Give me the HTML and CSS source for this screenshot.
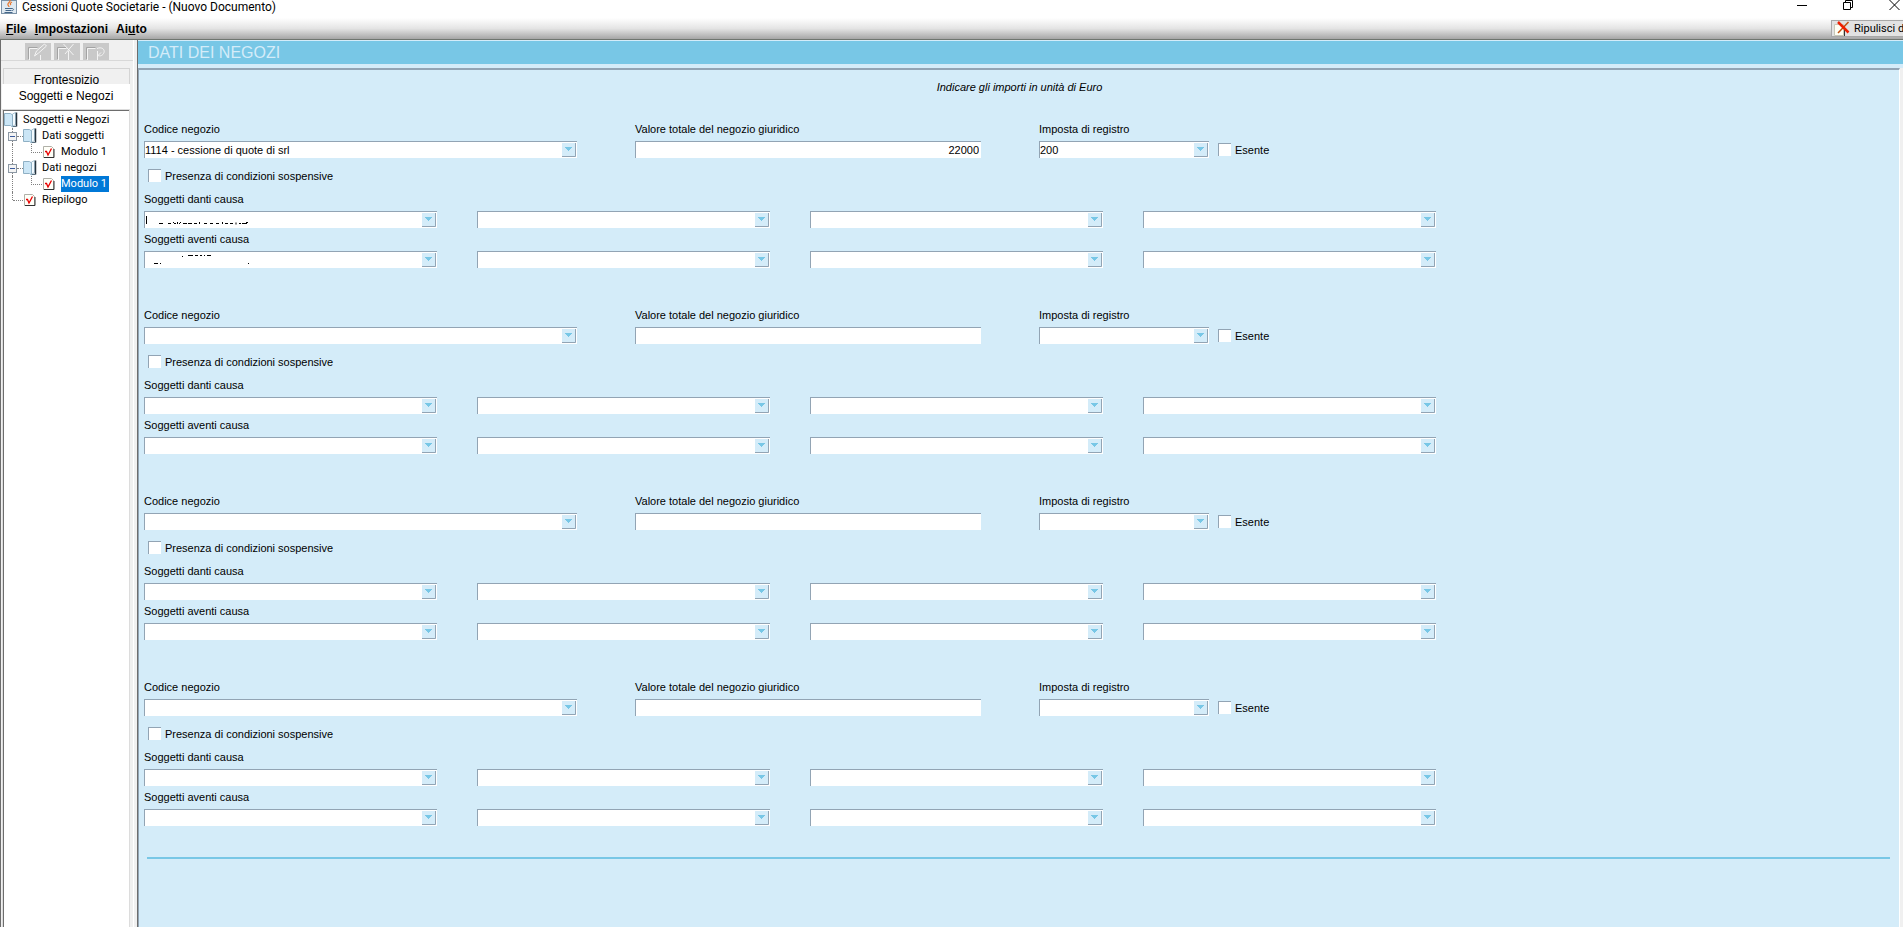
FILE: index.html
```html
<!DOCTYPE html>
<html lang="it">
<head>
<meta charset="utf-8">
<title>Cessioni Quote Societarie - (Nuovo Documento)</title>
<link rel="stylesheet" href="styles.css">
</head>
<body>
<svg class="defs" aria-hidden="true">
  <symbol id="folder" viewBox="0 0 14 16">
    <path d="M8.500 2L11.500.5v12l-3 2z" fill="#f4fbff" stroke="#a9c4d4"/>
    <path d="M.5 1.500h6l2 1.500v12l-2-1.500h-6z" fill="#cbe6f6" stroke="#8fb0c4"/>
    <path d="M12.500.5v14" stroke="#26333d" stroke-width="1.500"/>
    <path d="M9 14.500h3.500" stroke="#5a7080"/>
  </symbol>
  <symbol id="sheet" viewBox="0 0 12 14">
    <path d="M.5 1.500h8l2 2v9h-10z" fill="#fffff8" stroke="#b0b0a8"/>
    <path d="M11 4v8.500H1" fill="none" stroke="#333"/>
    <path d="M2 6.500h1.500L5 10l3.500-6.500" fill="none" stroke="#e80000" stroke-width="1.300"/>
  </symbol>
</svg>
<div class="window">
  <header class="titlebar">
    <svg class="app-icon" viewBox="0 0 16 16" width="16" height="16">
      <rect x=".5" y=".5" width="15" height="13" fill="#dfe9f1" stroke="#7c93a8"/>
      <path d="M9 0c1 2-3 3-2 5 .4 1 1 1 1 2M11 2c-2 1-2 2-1 3" fill="none" stroke="#e8762c" stroke-width="1.200"/>
      <path d="M4 8.500h7M4.500 10.500h6M3.500 12.500h8M11 8.500c2 0 2 2 0 2" fill="none" stroke="#44678a"/>
    </svg>
    <h1 class="title">Cessioni Quote Societarie - (Nuovo Documento)</h1>
    <div class="window-buttons">
      <button type="button" aria-label="Riduci"><svg viewBox="0 0 11 11"><path d="M0 5.500h10" /></svg></button>
      <button type="button" aria-label="Ripristina"><svg viewBox="0 0 11 11"><path d="M.5 2.500h7v7h-7zM2.500 2V.5h7v7H8" /></svg></button>
      <button type="button" aria-label="Chiudi"><svg viewBox="0 0 11 11"><path d="M.5 0l10 10M10.500 0l-10 10" /></svg></button>
    </div>
  </header>
  <nav class="menubar">
    <button type="button"><u>F</u>ile</button>
    <button type="button"><u>I</u>mpostazioni</button>
    <button type="button">Ai<u>u</u>to</button>
    <button type="button" class="clear">
      <svg viewBox="0 0 16 16" width="16" height="16">
        <path d="M.5 3.500h9v11h-9z" fill="#fffff4" stroke="#c8c8b8"/><path d="M10.500 5v10.500H1" fill="none" stroke="#333"/>
        <path d="M14.500 1L4 12" fill="none" stroke="#c05010" stroke-width="1.500"/>
        <path d="M4 1l10.500 10.500" fill="none" stroke="#f02000" stroke-width="2.500"/>
      </svg>
      <span>Ripulisci da</span>
    </button>
  </nav>
  <div class="workspace">
    <aside class="sidebar">
      <div class="tools">
        <button type="button" disabled aria-label="Modifica modulo"><svg viewBox="0 0 26 17"><path class="shade" d="M3.500 16V4.500h9"/><path d="M4.500 17V5.500h8M15.500 12v5"/><path d="M9.500 13l2-5 8-7 2 2-8 7z"/></svg></button>
        <button type="button" disabled aria-label="Elimina modulo"><svg viewBox="0 0 26 17"><path class="shade" d="M3.500 16V4.500h9"/><path d="M4.500 17V5.500h8M14.500 8v9"/><path d="M9.500 1l10 11M19.500 1L11 11"/></svg></button>
        <button type="button" disabled aria-label="Ripristina modulo"><svg viewBox="0 0 26 17"><path class="shade" d="M3.500 16V4.500h9"/><path d="M4.500 17V5.500h8M14.500 8v9"/><path d="M14 5.500c5-2 8 1 7 4s-4 4-6 3l3-3"/></svg></button>
      </div>
      <div class="tabs">
        <button type="button" class="tab">Frontespizio</button>
        <button type="button" class="tab active">Soggetti e Negozi</button>
      </div>
      <ul class="tree">
        <li class="root"><svg class="folder"><use href="#folder"/></svg><span>Soggetti e Negozi</span></li>
        <li class="branch"><button type="button" class="toggle" aria-label="Comprimi Dati soggetti"></button><svg class="folder"><use href="#folder"/></svg><span>Dati soggetti</span></li>
        <li class="leaf"><svg class="sheet"><use href="#sheet"/></svg><span>Modulo 1</span></li>
        <li class="branch"><button type="button" class="toggle" aria-label="Comprimi Dati negozi"></button><svg class="folder"><use href="#folder"/></svg><span>Dati negozi</span></li>
        <li class="leaf"><svg class="sheet"><use href="#sheet"/></svg><span class="selected">Modulo 1</span></li>
        <li class="last"><svg class="sheet"><use href="#sheet"/></svg><span>Riepilogo</span></li>
      </ul>
    </aside>
    <main class="panel">
      <h2 class="panel-title">DATI DEI NEGOZI</h2>
      <div class="page">
        <p class="hint">Indicare gli importi in unità di Euro</p>
        <form class="deals" id="deals"></form>
        <hr class="rule">
      </div>
    </main>
  </div>
</div>
<script src="form.js"></script>
</body>
</html>
```
FILE: styles.css
```css
* { box-sizing: border-box; }

body {
  margin: 0;
  background: #f0f0f0;
  color: #000;
  font: 11px/14px "Liberation Sans", Arial, sans-serif;
}

button, input, select { font: inherit; color: inherit; }
button { padding: 0; border: 0; background: none; }
h1, h2, p, ul { margin: 0; padding: 0; font-weight: normal; }

.defs { display: none; }

.window {
  display: flex;
  flex-direction: column;
  min-height: 100vh;
  overflow: hidden;
}

/* Title bar */
.titlebar {
  display: flex;
  align-items: flex-start;
  gap: 5px;
  height: 18px;
  padding-left: 1px;
  background: #fff;
}
.title {
  font: 12px/15px Roboto, "Open Sans", sans-serif;
}
.window-buttons {
  display: flex;
  gap: 35px;
  margin-left: auto;
  padding-right: 3px;
}
.window-buttons button { height: 11px; width: 11px; }
.window-buttons svg {
  display: block;
  width: 11px;
  height: 11px;
  fill: none;
  stroke: #000;
}

/* Menu bar */
.menubar {
  display: flex;
  align-items: center;
  gap: 8px;
  height: 22px;
  padding-left: 6px;
  border-bottom: 1px solid #6f756f;
  background: linear-gradient(#fff, #e4e4e4 50%, #a6a6a6);
  font-size: 12px;
  font-weight: bold;
}
.menubar .clear {
  display: flex;
  align-items: center;
  gap: 4px;
  width: 72px;
  height: 17px;
  margin-left: auto;
  padding-left: 2px;
  overflow: hidden;
  border: 1px solid #a8a8a8;
  border-right: 0;
  background: #e2e2e2;
  font: 11px/15px Roboto, sans-serif;
  white-space: nowrap;
}
.clear svg { flex: none; }

.workspace { display: flex; flex: 1; }

/* Sidebar */
.sidebar {
  display: flex;
  flex: none;
  flex-direction: column;
  width: 134px;
  border-left: 1px solid #6d6d6d;
  border-right: 1px solid #fff;
}
.tools {
  display: flex;
  justify-content: center;
  gap: 3px;
  height: 21px;
  padding-top: 3px;
  border-bottom: 1px solid #d8d8d8;
}
.tools button {
  width: 26px;
  height: 17px;
  background: #c9c9c9;
}
.tools svg {
  display: block;
  width: 26px;
  height: 17px;
  fill: none;
  stroke: #f4f4f4;
}
.tools .shade { stroke: #a4a4a4; }
.tabs {
  display: flex;
  flex-direction: column;
  padding: 7px 3px 0 1px;
  font-size: 12px;
}
.tab {
  height: 16px;
  margin-left: 1px;
  padding-top: 4px;
  overflow: hidden;
  border: 1px solid #d4d4d4;
  border-bottom: 0;
  line-height: 14px;
}
.tab.active {
  height: 26px;
  margin-left: 0;
  padding: 0 0 2px;
  border: 0;
  background: #fff;
}

.tree {
  flex: 1;
  margin: 0 4px 0 2px;
  padding-top: 1px;
  border: solid #6d6d6d;
  border-width: 1px 0 0 1px;
  outline: 1px solid #dcdcdc;
  background: #fff;
  font: 11px/16px Roboto, sans-serif;
  list-style: none;
  white-space: nowrap;
}
.tree li {
  display: flex;
  position: relative;
  align-items: center;
  height: 16px;
}
.folder { width: 14px; height: 16px; margin-right: 5px; }
.sheet { width: 12px; height: 14px; margin-right: 6px; }
.selected {
  padding-right: 2px;
  background: #0078d7;
  color: #fff;
}
.branch { padding-left: 4px; }
.leaf { padding-left: 39px; }
.last { padding-left: 20px; }
.toggle {
  position: relative;
  z-index: 1;
  width: 9px;
  height: 9px;
  margin-right: 6px;
  border: 1px solid #8c98a4;
  background: linear-gradient(#3a5a9c, #3a5a9c) center / 5px 1px no-repeat #f4f4f4;
}
.tree li:not(.root)::before {
  content: "";
  position: absolute;
  top: 0;
  left: 8px;
  height: 16px;
  border-left: 1px dotted #808080;
}
.tree .last::before { height: 8px !important; }
.tree li:not(.root)::after {
  content: "";
  position: absolute;
  top: 8px;
  left: 13px;
  width: 6px;
  border-top: 1px dotted #808080;
}
.tree .leaf::after {
  top: 0 !important;
  left: 27px !important;
  width: 10px !important;
  height: 8px;
  border: dotted #808080;
  border-width: 0 0 1px 1px !important;
}
.tree .last::after { left: 9px !important; width: 10px !important; }

/* Form panel */
.panel {
  display: flex;
  flex: 1;
  flex-direction: column;
  min-width: 0;
  margin-left: 3px;
  border-left: 1px solid #6d6d6d;
}
.panel-title {
  height: 28px;
  padding-left: 10px;
  border: solid #d4ecf9;
  border-width: 1px 0 4px;
  background: #78c7e6;
  color: #d4ecf9;
  font-size: 16px;
  line-height: 23px;
}
.page {
  flex: 1;
  margin-right: 3px;
  padding: 10px 9px 0 5px;
  border: solid #92a4b4;
  border-width: 2px 0 0 1px;
  border-right: 1px solid #fff;
  background: #d4ecf9;
}
.hint {
  padding-left: 5px;
  font-style: italic;
  text-align: center;
}
.deals {
  display: grid;
  row-gap: 40px;
  padding-top: 28px;
}
.deal { display: grid; }
.line {
  display: grid;
  grid-template-columns: minmax(0, 433px) minmax(0, 346px) auto;
  column-gap: 58px;
  margin-bottom: 9px;
}
.pair { display: flex; gap: 9px; align-items: flex-end; }
.field { display: grid; row-gap: 5px; }
.tax { flex: 0 1 170px; }

.subjects {
  display: grid;
  grid-template-columns: repeat(4, minmax(0, 293px));
  column-gap: 40px;
  margin: 0;
  padding: 0;
  border: 0;
}
.subjects legend {
  height: 18px;
  padding: 0;
  margin-bottom: 1px;
}
.subjects + .subjects { margin-top: 4px; }
.check + .subjects { margin-top: 8px; }

.box {
  width: 100%;
  height: 17px;
  margin: 0;
  padding: 0 2px 0 0;
  border: solid #92a4b4;
  border-width: 1px 0 0 1px;
  border-radius: 0;
  outline: 0;
  background-color: #fff;
  appearance: none;
}
.amount { text-align: right; }
.select {
  display: block;
  position: relative;
}
.select svg {
  position: absolute;
  top: 2px;
  right: 1px;
  width: 14px;
  height: 14px;
  pointer-events: none;
}
.select .residue {
  top: 0;
  right: auto;
  left: 0;
  width: 110px;
  height: 17px;
  stroke: #000;
}
.check {
  display: flex;
  align-items: center;
  gap: 4px;
  height: 17px;
}
.check input {
  width: 13px;
  height: 13px;
  margin: 0;
  border: solid #92a4b4;
  border-width: 1px 0 0 1px;
  background: #fff;
  appearance: none;
}
.condition { padding-left: 4px; }

.rule {
  height: 2px;
  margin: 31px 0 0 3px;
  border: 0;
  background: #78c7e6;
}
```
FILE: form.js
```js
const ARROW = '<svg viewBox="0 0 14 14"><path d="M0 0h14v14H0z" fill="#d4ecf9"/>' +
  '<path d="M13.500 0v13.500H0" fill="none" stroke="#92a4b4"/><path d="M3 4h7v1H9v1H8v1H7v1H6V7H5V6H4V5H3z" fill="#78c7e6"/></svg>';

const deals = [
  { code: '1114 - cessione di quote di srl', value: '22000', tax: '200' },
  {}, {}, {},
];

// Remains of the erased names in the first deal.
const RESIDUE = {
  'from-0-1': 'M2.500 5v8M15 12.500h4M24 12.500h3M29 11.500h1M30 12.500h2M33.500 11v2M36 11.500h1M35 12.500h1M39 12.500h4M44 12.500h4M50 12.500h3M55.500 11v2' +
    'M60 12.500h3M66 12.500h3M72 12.500h3M78.500 11v2M81 12.500h3M86 12.500h3M92 11.500v2M95 12.500h2M98 12.500h5M102 11.500h2',
  'to-0-1': 'M10 12.500h4M16 12.500h1M38 5.500h1M44 4.500h5M51 4.500h3M56 4.500h2M60 4.500h1M63 4.500h4M104 12.500h1',
};

const select = (id, value = '', label = '') =>
  `<span class="select"><select class="box" id="${id}"${label ? ` aria-label="${label}"` : ''}><option>${value}</option></select>${ARROW}` +
  (RESIDUE[id] ? `<svg class="residue" viewBox="0 0 110 17"><path d="${RESIDUE[id]}"/></svg>` : '') + '</span>';

const subjects = (id, title) =>
  `<fieldset class="subjects"><legend>${title}</legend>` +
  [1, 2, 3, 4].map(n => select(`${id}-${n}`, '', `${title} ${n}`)).join('') + '</fieldset>';

document.getElementById('deals').innerHTML = deals.map((deal, i) => `
  <section class="deal">
    <div class="line">
      <div class="field"><label for="code-${i}">Codice negozio</label>${select(`code-${i}`, deal.code)}</div>
      <div class="field"><label for="value-${i}">Valore totale del negozio giuridico</label>
        <input class="box amount" id="value-${i}" type="text" value="${deal.value || ''}"></div>
      <div class="pair">
        <div class="field tax"><label for="tax-${i}">Imposta di registro</label>${select(`tax-${i}`, deal.tax)}</div>
        <label class="check"><input type="checkbox">Esente</label>
      </div>
    </div>
    <label class="check condition"><input type="checkbox">Presenza di condizioni sospensive</label>
    ${subjects(`from-${i}`, 'Soggetti danti causa')}
    ${subjects(`to-${i}`, 'Soggetti aventi causa')}
  </section>`).join('');
```
